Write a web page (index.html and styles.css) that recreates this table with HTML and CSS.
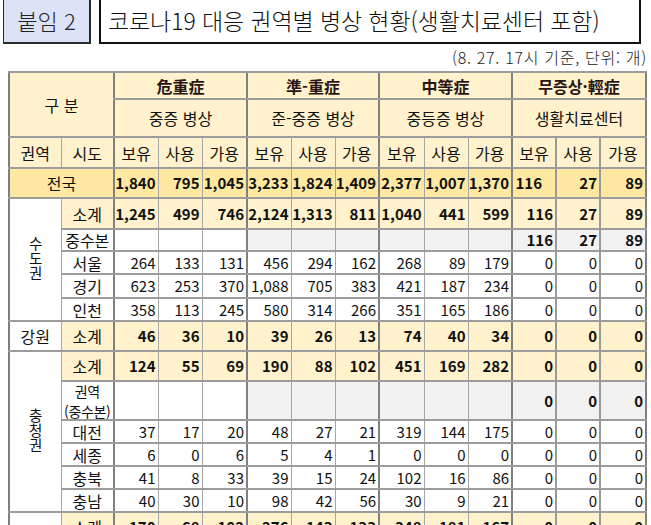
FILE: index.html
```html
<!DOCTYPE html>
<html lang="ko">
<head>
<meta charset="utf-8">
<link rel="stylesheet" href="styles.css">
</head>
<body>
<div class="page">
  <div class="head">
    <div class="tag">붙임 2</div>
    <div class="title">코로나19 대응 권역별 병상 현황(생활치료센터 포함)</div>
  </div>
  <div class="note">(8. 27. 17시 기준, 단위: 개)</div>
  <table class="beds">
    <colgroup>
      <col class="w52"><col class="w53">
      <col class="w44 grp"><col class="w44"><col class="w45">
      <col class="w44 grp"><col class="w44"><col class="w44">
      <col class="w45 grp"><col class="w44"><col class="w44">
      <col class="w44 grp"><col class="w44 thick"><col class="w46 thick">
    </colgroup>
    <tr class="h27">
      <td class="hd" colspan="2" rowspan="2">구 분</td>
      <td class="hd b dk" colspan="3">危重症</td>
      <td class="hd b dk" colspan="3">準-重症</td>
      <td class="hd b dk" colspan="3">中等症</td>
      <td class="hd b dk" colspan="3">무증상·輕症</td>
    </tr>
    <tr class="h38">
      <td class="hd" colspan="3">중증 병상</td>
      <td class="hd" colspan="3">준-중증 병상</td>
      <td class="hd" colspan="3">중등증 병상</td>
      <td class="hd" colspan="3">생활치료센터</td>
    </tr>
    <tr class="h31">
      <td class="hd">권역</td><td class="hd">시도</td>
      <td class="hd">보유</td><td class="hd">사용</td><td class="hd">가용</td>
      <td class="hd">보유</td><td class="hd">사용</td><td class="hd">가용</td>
      <td class="hd">보유</td><td class="hd">사용</td><td class="hd">가용</td>
      <td class="hd">보유</td><td class="hd">사용</td><td class="hd">가용</td>
    </tr>
    <tr class="h30 nat">
      <td colspan="2" class="ctr">전국</td>
      <td class="n b">1,840</td><td class="n b">795</td><td class="n b">1,045</td>
      <td class="n b">3,233</td><td class="n b">1,824</td><td class="n b">1,409</td>
      <td class="n b">2,377</td><td class="n b">1,007</td><td class="n b">1,370</td>
      <td class="n b pr">116</td><td class="n b">27</td><td class="n b">89</td>
    </tr>
    <tr class="h31">
      <td class="ctr reg" rowspan="5"><span class="vert">수도권</span></td>
      <td class="ctr sub">소계</td>
      <td class="n b sub">1,245</td><td class="n b sub">499</td><td class="n b sub">746</td>
      <td class="n b sub">2,124</td><td class="n b sub">1,313</td><td class="n b sub">811</td>
      <td class="n b sub">1,040</td><td class="n b sub">441</td><td class="n b sub">599</td>
      <td class="n b sub">116</td><td class="n b sub">27</td><td class="n b sub">89</td>
    </tr>
    <tr class="h22">
      <td class="ctr">중수본</td>
      <td></td><td></td><td></td>
      <td class="gray"></td><td class="gray"></td><td class="gray"></td>
      <td class="gray"></td><td class="gray"></td><td class="gray"></td>
      <td class="n b gray">116</td><td class="n b gray">27</td><td class="n b gray">89</td>
    </tr>
    <tr class="h23">
      <td class="ctr">서울</td>
      <td class="n">264</td><td class="n">133</td><td class="n">131</td>
      <td class="n">456</td><td class="n">294</td><td class="n">162</td>
      <td class="n">268</td><td class="n">89</td><td class="n">179</td>
      <td class="n">0</td><td class="n">0</td><td class="n">0</td>
    </tr>
    <tr class="h24">
      <td class="ctr">경기</td>
      <td class="n">623</td><td class="n">253</td><td class="n">370</td>
      <td class="n">1,088</td><td class="n">705</td><td class="n">383</td>
      <td class="n">421</td><td class="n">187</td><td class="n">234</td>
      <td class="n">0</td><td class="n">0</td><td class="n">0</td>
    </tr>
    <tr class="h23">
      <td class="ctr">인천</td>
      <td class="n">358</td><td class="n">113</td><td class="n">245</td>
      <td class="n">580</td><td class="n">314</td><td class="n">266</td>
      <td class="n">351</td><td class="n">165</td><td class="n">186</td>
      <td class="n">0</td><td class="n">0</td><td class="n">0</td>
    </tr>
    <tr class="h30">
      <td class="ctr">강원</td>
      <td class="ctr sub">소계</td>
      <td class="n b sub">46</td><td class="n b sub">36</td><td class="n b sub">10</td>
      <td class="n b sub">39</td><td class="n b sub">26</td><td class="n b sub">13</td>
      <td class="n b sub">74</td><td class="n b sub">40</td><td class="n b sub">34</td>
      <td class="n b sub">0</td><td class="n b sub">0</td><td class="n b sub">0</td>
    </tr>
    <tr class="h30">
      <td class="ctr reg" rowspan="6"><span class="vert">충청권</span></td>
      <td class="ctr sub">소계</td>
      <td class="n b sub">124</td><td class="n b sub">55</td><td class="n b sub">69</td>
      <td class="n b sub">190</td><td class="n b sub">88</td><td class="n b sub">102</td>
      <td class="n b sub">451</td><td class="n b sub">169</td><td class="n b sub">282</td>
      <td class="n b sub">0</td><td class="n b sub">0</td><td class="n b sub">0</td>
    </tr>
    <tr class="h39">
      <td class="ctr"><div class="two"><span>권역</span><span>(중수본)</span></div></td>
      <td></td><td></td><td></td>
      <td class="gray"></td><td class="gray"></td><td class="gray"></td>
      <td class="gray"></td><td class="gray"></td><td class="gray"></td>
      <td class="n b gray">0</td><td class="n b gray">0</td><td class="n b gray">0</td>
    </tr>
    <tr class="h23">
      <td class="ctr">대전</td>
      <td class="n">37</td><td class="n">17</td><td class="n">20</td>
      <td class="n">48</td><td class="n">27</td><td class="n">21</td>
      <td class="n">319</td><td class="n">144</td><td class="n">175</td>
      <td class="n">0</td><td class="n">0</td><td class="n">0</td>
    </tr>
    <tr class="h23">
      <td class="ctr">세종</td>
      <td class="n">6</td><td class="n">0</td><td class="n">6</td>
      <td class="n">5</td><td class="n">4</td><td class="n">1</td>
      <td class="n">0</td><td class="n">0</td><td class="n">0</td>
      <td class="n">0</td><td class="n">0</td><td class="n">0</td>
    </tr>
    <tr class="h23">
      <td class="ctr">충북</td>
      <td class="n">41</td><td class="n">8</td><td class="n">33</td>
      <td class="n">39</td><td class="n">15</td><td class="n">24</td>
      <td class="n">102</td><td class="n">16</td><td class="n">86</td>
      <td class="n">0</td><td class="n">0</td><td class="n">0</td>
    </tr>
    <tr class="h23">
      <td class="ctr">충남</td>
      <td class="n">40</td><td class="n">30</td><td class="n">10</td>
      <td class="n">98</td><td class="n">42</td><td class="n">56</td>
      <td class="n">30</td><td class="n">9</td><td class="n">21</td>
      <td class="n">0</td><td class="n">0</td><td class="n">0</td>
    </tr>
    <tr class="h30">
      <td class="ctr reg">&nbsp;</td>
      <td class="ctr sub">소계</td>
      <td class="n b sub">170</td><td class="n b sub">68</td><td class="n b sub">102</td>
      <td class="n b sub">276</td><td class="n b sub">143</td><td class="n b sub">133</td>
      <td class="n b sub">348</td><td class="n b sub">181</td><td class="n b sub">167</td>
      <td class="n b sub">0</td><td class="n b sub">0</td><td class="n b sub">0</td>
    </tr>
  </table>
</div>
</body>
</html>
```

FILE: styles.css
```css
html, body {
  margin: 0;
  padding: 0;
  background: #ffffff;
}

.page {
  font-family: "Noto Sans CJK KR", "Noto Sans", sans-serif;
  color: #111;
}

.head {
  display: flex;
  align-items: stretch;
  padding-left: 3px;
  gap: 8px;
  height: 44px;
}

.tag {
  width: 88px;
  background: #dce3f6;
  border: 1px solid #2b2b2b;
  border-top: none;
  border-right: 2px solid #1f3320;
  border-bottom: 2px solid #2b2b2b;
  box-sizing: border-box;
  display: flex;
  align-items: center;
  justify-content: center;
  font-size: 22px;
  font-weight: 300;
  color: #222;
  padding-bottom: 3px;
}

.title {
  width: 542px;
  box-sizing: border-box;
  border: 2px solid #111;
  border-top: none;
  display: flex;
  align-items: center;
  padding-left: 7px;
  padding-bottom: 3px;
  font-size: 23px;
  font-weight: 300;
  color: #111;
  letter-spacing: -0.1px;
}

.note {
  text-align: right;
  padding-right: 4px;
  font-size: 16px;
  font-weight: 300;
  letter-spacing: 0.7px;
  color: #222;
  height: 27px;
  line-height: 27px;
}

.beds {
  margin-left: 8px;
  border-collapse: collapse;
  table-layout: fixed;
  width: 639px;
  border: 2px solid #7f7f7f;
  font-size: 14.5px;
}

.w52 { width: 52px; }
.w53 { width: 53px; }
.w44 { width: 44px; }
.w45 { width: 45px; }
.w46 { width: 46px; }

.grp { border-left: 2px solid #808080; }
.thick { border-left: 2px solid #9a9a9a; }

.beds td {
  padding: 0;
  border-top: 2px solid #9c9c9c;
  border-bottom: 2px solid #9c9c9c;
  border-left: 1px solid #a6a6a6;
  border-right: 1px solid #a6a6a6;
  white-space: nowrap;
  line-height: 18px;
  vertical-align: middle;
}

.h22 { height: 22px; }
.h23 { height: 23px; }
.h24 { height: 24px; }
.h27 { height: 27px; }
.h30 { height: 30px; }
.h31 { height: 31px; }
.h38 { height: 38px; }
.h39 { height: 39px; }

.hd {
  background: #fff2cc;
  text-align: center;
  font-size: 16px;
}

.dk { color: #2a1515; }

.b { font-weight: 700; }

.ctr {
  text-align: center;
  font-size: 16px;
}

.n {
  text-align: right;
  padding-right: 2px !important;
  font-size: 15px;
}

.pr { padding-right: 13px !important; }

.nat td { background: #ffe8a1; }

.sub { background: #fff2cc; }

.gray { background: #f2f2f2; }

.reg {
  background: #ffffff;
}

.vert {
  display: inline-block;
  writing-mode: vertical-rl;
  text-orientation: upright;
  font-size: 14.5px;
  letter-spacing: 0.8px;
  line-height: 18px;
}

.two {
  height: 35px;
  display: flex;
  flex-direction: column;
  justify-content: center;
  align-items: center;
  font-size: 14px;
  line-height: 20px;
  letter-spacing: -0.3px;
}
```
